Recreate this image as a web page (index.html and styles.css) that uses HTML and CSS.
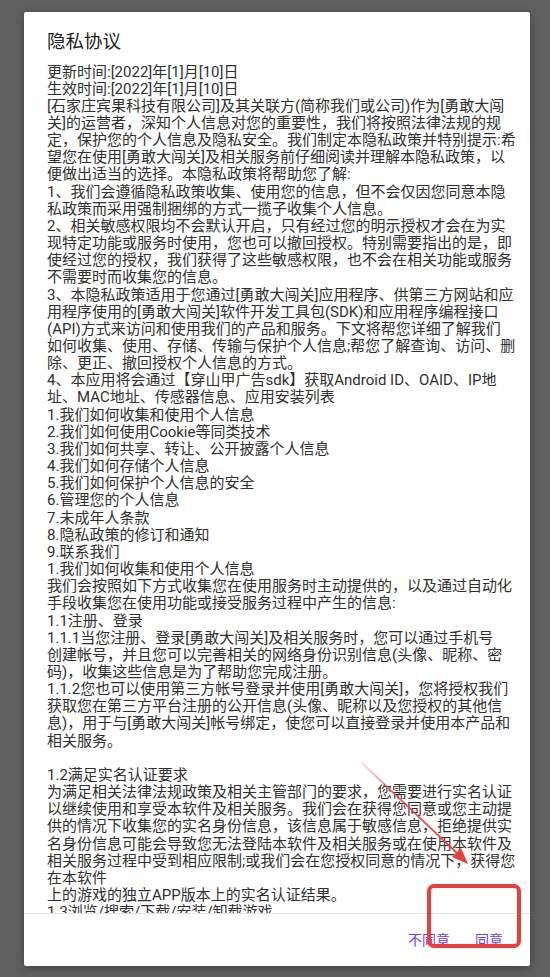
FILE: index.html
```html
<!DOCTYPE html>
<html lang="zh-CN">
<head>
<meta charset="utf-8">
<title>隐私协议</title>
<link rel="stylesheet" href="styles.css">
</head>
<body>
<div class="dialog">
  <div class="title">隐私协议</div>
  <div class="scroll">
    <p class="message">更新时间:[2022]年[1]月[10]日<br>生效时间:[2022]年[1]月[10]日<br>[石家庄宾果科技有限公司]及其关联方(简称我们或公司)作为[勇敢大闯<br>关]的运营者，深知个人信息对您的重要性，我们将按照法律法规的规<br>定，保护您的个人信息及隐私安全。我们制定本隐私政策并特别提示:希<br>望您在使用[勇敢大闯关]及相关服务前仔细阅读并理解本隐私政策，以<br>便做出适当的选择。本隐私政策将帮助您了解:<br>1、我们会遵循隐私政策收集、使用您的信息，但不会仅因您同意本隐<br>私政策而采用强制捆绑的方式一揽子收集个人信息。<br>2、相关敏感权限均不会默认开启，只有经过您的明示授权才会在为实<br>现特定功能或服务时使用，您也可以撤回授权。特别需要指出的是，即<br>使经过您的授权，我们获得了这些敏感权限，也不会在相关功能或服务<br>不需要时而收集您的信息。<br>3、本隐私政策适用于您通过[勇敢大闯关]应用程序、供第三方网站和应<br>用程序使用的[勇敢大闯关]软件开发工具包(SDK)和应用程序编程接口<br>(API)方式来访问和使用我们的产品和服务。下文将帮您详细了解我们<br>如何收集、使用、存储、传输与保护个人信息;帮您了解查询、访问、删<br>除、更正、撤回授权个人信息的方式。<br>4、本应用将会通过【穿山甲广告sdk】获取Android ID、OAID、IP地<br>址、MAC地址、传感器信息、应用安装列表<br>1.我们如何收集和使用个人信息<br>2.我们如何使用Cookie等同类技术<br>3.我们如何共享、转让、公开披露个人信息<br>4.我们如何存储个人信息<br>5.我们如何保护个人信息的安全<br>6.管理您的个人信息<br>7.未成年人条款<br>8.隐私政策的修订和通知<br>9.联系我们<br>1.我们如何收集和使用个人信息<br>我们会按照如下方式收集您在使用服务时主动提供的，以及通过自动化<br>手段收集您在使用功能或接受服务过程中产生的信息:<br>1.1注册、登录<br>1.1.1当您注册、登录[勇敢大闯关]及相关服务时，您可以通过手机号<br>创建帐号，并且您可以完善相关的网络身份识别信息(头像、昵称、密<br>码)，收集这些信息是为了帮助您完成注册。<br>1.1.2您也可以使用第三方帐号登录并使用[勇敢大闯关]，您将授权我们<br>获取您在第三方平台注册的公开信息(头像、昵称以及您授权的其他信<br>息)，用于与[勇敢大闯关]帐号绑定，使您可以直接登录并使用本产品和<br>相关服务。<br><br>1.2满足实名认证要求<br>为满足相关法律法规政策及相关主管部门的要求，您需要进行实名认证<br>以继续使用和享受本软件及相关服务。我们会在获得您同意或您主动提<br>供的情况下收集您的实名身份信息，该信息属于敏感信息，拒绝提供实<br>名身份信息可能会导致您无法登陆本软件及相关服务或在使用本软件及<br>相关服务过程中受到相应限制;或我们会在您授权同意的情况下，获得您<br>在本软件<br>上的游戏的独立APP版本上的实名认证结果。<br>1.3浏览/搜索/下载/安装/卸载游戏</p>
  </div>
  <div class="actions">
    <span class="btn">不同意</span>
    <span class="btn">同意</span>
  </div>
</div>
<svg class="annotation" width="550" height="977" viewBox="0 0 550 977" aria-hidden="true">
  <defs>
    <linearGradient id="fade" x1="362" y1="763" x2="466" y2="862" gradientUnits="userSpaceOnUse">
      <stop offset="0" stop-color="#e8403c" stop-opacity="0.15"/>
      <stop offset="0.35" stop-color="#e8403c" stop-opacity="0.8"/>
      <stop offset="1" stop-color="#e8403c"/>
    </linearGradient>
  </defs>
  <line x1="362" y1="763" x2="460" y2="856" stroke="url(#fade)" stroke-width="1.8" stroke-linecap="round"/>
  <polygon points="468,864 452,857 461,848" fill="#e8403c"/>
  <rect x="429" y="886" width="90" height="60" rx="5" ry="5" fill="none" stroke="#e8403c" stroke-width="4"/>
</svg>
</body>
</html>
```
FILE: styles.css
```css
html, body {
  margin: 0;
  padding: 0;
}
body {
  width: 550px;
  height: 977px;
  overflow: hidden;
  background: #606060;
  font-family: Roboto, "Noto Sans CJK SC", sans-serif;
  position: relative;
}
.dialog {
  margin: 12px 0 0 24px;
  width: 506px;
  height: 954px;
  background: #ffffff;
  border-radius: 2px;
  box-shadow: 0 2px 10px rgba(0, 0, 0, 0.35);
  display: flex;
  flex-direction: column;
}
.title {
  padding: 18px 23px 0 23px;
  font-size: 18.5px;
  line-height: 24px;
  color: #212121;
}
.scroll {
  height: 860px;
  overflow: hidden;
  padding: 9.5px 0 0 23px;
  box-sizing: border-box;
  border-bottom: 1px solid #e3e3e3;
}
.message {
  margin: 0;
  font-size: 15px;
  line-height: 17.15px;
  color: #303030;
  white-space: nowrap;
}
.actions {
  flex: 1;
  display: flex;
  justify-content: flex-end;
  align-items: center;
  gap: 25px;
  padding: 0 27px 0 0;
}
.btn {
  font-size: 14px;
  line-height: 20px;
  color: #6a3fe6;
}
.annotation {
  position: absolute;
  left: 0;
  top: 0;
}
```
